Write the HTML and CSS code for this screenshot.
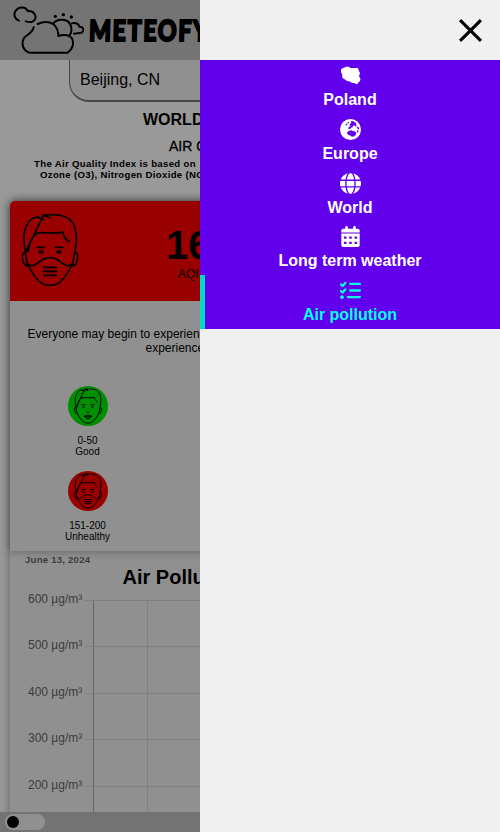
FILE: index.html
```html
<!DOCTYPE html>
<html lang="en">
<head>
<meta charset="utf-8">
<title>Meteofy</title>
<link rel="stylesheet" href="styles.css">
</head>
<body>
<svg class="defs" aria-hidden="true">
  <symbol id="head" viewBox="64 54 172 222">
    <path d="M76 173C70 140 68 105 85 83C90 75 100 68 110 66L132 74L112 65M131 60L151 70L133 60C160 58 190 57 211 75C234 98 232 135 224 173C222 198 215 214 205 230C195 246 185 260 171 267Q150 275 129 267C115 260 105 246 95 230C85 214 78 198 76 173ZM84 172C88 145 94 122 113 114C135 109 163 120 188 111Q192 132 209 140M76 173C61 168 67 208 79 212H88M224 173C239 168 233 208 221 212H212M110 157H135M165 157H190"/>
    <ellipse class="eye" cx="123" cy="171" rx="8" ry="5"/><ellipse class="eye" cx="177" cy="171" rx="8" ry="5"/>
  </symbol>
  <symbol id="mask-face" viewBox="64 54 172 222">
    <use href="#head" x="64" y="54" width="172" height="222"/>
    <path d="M79 205C95 220 112 207 127 194Q150 181 173 194C188 207 205 220 221 205M129 217H171M129 229H171M129 241H171"/>
  </symbol>
  <symbol id="happy-face" viewBox="64 54 172 222">
    <use href="#head" x="64" y="54" width="172" height="222"/>
    <path d="M142 202Q150 208 158 202M128 227Q150 216 172 227Q150 260 128 227ZM136 231H164"/>
  </symbol>
</svg>
<header class="header">
  <svg class="logo" viewBox="0 0 252 180"><path d="M57 62C45 58 40 45 46 34C54 20 76 18 83 33C92 32 98 34 102 40C110 48 107 62 97 65Q87 67 77 64M113 72C130 64 150 64 162 74C172 84 175 95 175 108C190 102 208 104 216 115C223 130 218 148 203 158H88C70 152 64 135 70 118C76 103 96 104 101 82M160 70C172 55 205 54 212 76C216 88 214 98 210 104M216 70C228 66 236 72 238 80C250 80 254 90 246 97C240 101 230 99 222 101"/><g class="dots"><circle cx="166" cy="49" r="5"/><circle cx="190" cy="44" r="5"/><circle cx="214" cy="51" r="5"/></g></svg>
  <span class="brand">METEOFY</span>
</header>
<main class="page">
  <div class="search">Beijing, CN</div>
  <h1>WORLD AIR</h1>
  <h2>AIR QUALITY</h2>
  <p class="intro">The Air Quality Index is based on</p>
  <p class="intro second">Ozone (O3), Nitrogen Dioxide (NO2)</p>
  <section class="panel">
    <div class="card">
      <div class="score"><svg class="face"><use href="#mask-face"/></svg><div class="value"><strong>162</strong><span>AQI</span></div></div>
      <p class="advice">Everyone may begin to experience</p>
      <p class="advice more">experience</p>
      <div class="levels">
        <div class="level"><div class="circle good"><svg><use href="#happy-face"/></svg></div><span>0-50</span><span>Good</span></div>
        <div class="level"><div class="circle"><svg><use href="#mask-face"/></svg></div><span>151-200</span><span>Unhealthy</span></div>
      </div>
    </div>
    <div class="date">June 13, 2024</div>
    <h3>Air Pollution</h3>
    <div class="chart">
      <div class="tick"><span>600 µg/m³</span><i></i></div>
      <div class="tick"><span>500 µg/m³</span><i></i></div>
      <div class="tick"><span>400 µg/m³</span><i></i></div>
      <div class="tick"><span>300 µg/m³</span><i></i></div>
      <div class="tick"><span>200 µg/m³</span><i></i></div>
    </div>
  </section>
</main>
<footer class="footer"><div class="toggle"><i></i></div></footer>
<div class="shade"></div>
<aside class="drawer">
  <div class="close"><svg viewBox="0 0 24 24"><path d="M2 2L22 22M22 2L2 22"/></svg></div>
  <nav>
    <a><svg viewBox="0 0 21 21"><path d="M1 4.500L3 3L7 1.500L9.500 2L10 3L18 3L18.500 5L20 8L19 11L20.500 14L20 16L17.500 18.500L17 19.500L14 18L12 18L10 16.500L7 16L5 14.500L2.500 13L2 9L1 7Z"/></svg>Poland</a>
    <a><svg viewBox="0 0 512 512"><path fill-rule="evenodd" d="M256 0a256 256 0 1 0 0 512a256 256 0 1 0 0-512ZM268 52L310 50L345 70L375 90L402 118L390 142L410 162L392 184L366 176L350 150L322 164L306 200L278 206L262 230L228 246L196 232L210 202L240 184L260 160L230 150L246 120L270 94ZM180 84L208 70L222 88L196 108L176 106ZM140 128L172 112L180 136L154 156L134 150ZM404 204L440 180L463 220L466 260L438 250ZM220 286L276 272L310 292L350 298L386 326L400 356L372 400L322 430L280 424L250 400L206 390L176 362L174 320ZM410 270L452 290L436 342L412 310Z"/></svg>Europe</a>
    <a><svg viewBox="0 0 512 512"><path d="M352 256c0 22.200-1.200 43.600-3.300 64H163.300c-2.200-20.400-3.300-41.800-3.300-64s1.200-43.600 3.300-64h185.300c2.200 20.400 3.400 41.800 3.400 64zm28.800-64h123.100c5.300 20.500 8.100 41.900 8.100 64s-2.800 43.500-8.100 64H380.800c2.100-20.600 3.200-42 3.200-64s-1.100-43.400-3.200-64zm112.600-32H376.700c-10-63.900-29.800-117.400-55.300-151.600C399.600 29.200 463.400 86.400 493.400 160zm-149.100 0H167.700c6.100-36.400 15.500-68.600 27-94.700C214.700 20.700 236.200 0 256 0s41.300 20.700 61.300 65.300c11.500 26.100 20.900 58.300 27 94.700zm-209 0H18.600C48.600 86.400 112.400 29.200 190.600 8.400C165.100 42.600 145.300 96.100 135.300 160zM8.100 192h123.100c-2.100 20.600-3.200 42-3.200 64s1.100 43.400 3.200 64H8.100C2.800 299.500 0 278.100 0 256s2.800-43.500 8.100-64zm186.600 254.700c-11.600-26-20.900-58.300-27-94.700h176.600c-6.100 36.400-15.500 68.600-27 94.700C297.300 491.300 275.800 512 256 512s-41.300-20.700-61.300-65.300zM135.300 352c10 63.900 29.800 117.400 55.300 151.600C112.400 482.800 48.600 425.600 18.600 352h116.700zm358.100 0c-30 73.600-93.800 130.800-172 151.600c25.500-34.200 45.300-87.700 55.300-151.600h116.700z"/></svg>World</a>
    <a><svg viewBox="0 0 448 512"><path fill-rule="evenodd" d="M128 0c17.700 0 32 14.300 32 32v32h128V32c0-17.700 14.300-32 32-32s32 14.300 32 32v32h48c26.500 0 48 21.500 48 48v48H0v-48c0-26.500 21.500-48 48-48h48V32c0-17.700 14.300-32 32-32zM0 182h448v282c0 26.500-21.500 48-48 48H48c-26.500 0-48-21.500-48-48V182zm64 76v52h60v-52H64zm130 0v52h60v-52h-60zm130 0v52h60v-52h-60zM64 384v52h60v-52H64zm130 0v52h60v-52h-60zm130 0v52h60v-52h-60z"/></svg>Long term weather</a>
    <a class="active"><svg viewBox="0 0 512 512"><path class="lines" d="M24 110L63 145L128 72M24 270L63 305L128 232M248 96H484M248 256H484M192 416H484"/><circle cx="48" cy="416" r="46"/></svg>Air pollution</a>
  </nav>
</aside>
</body>
</html>
```
FILE: styles.css
```css
* { box-sizing: border-box; }
html, body { height: 100%; overflow: hidden; }
body { margin: 0; background: #fff; color: #000; font-family: "Liberation Sans", Arial, sans-serif; display: flex; flex-direction: column; }
h1, h2, h3, p { margin: 0; white-space: nowrap; }
.defs { position: absolute; width: 0; height: 0; }
.header { height: 60px; flex: none; background: #c2c2c2; display: flex; align-items: center; }
.logo { width: 84px; height: 60px; margin-right: 5px; fill: none; stroke: #000; stroke-width: 6; stroke-linecap: round; stroke-linejoin: round; }
.dots { fill: #000; stroke: none; }
.brand { font: 900 29px/60px Lato, sans-serif; letter-spacing: 2px; transform: scaleX(.8) skewX(-2deg); transform-origin: left; -webkit-text-stroke: 2px #000; }
.page { flex: 1; min-height: 0; overflow: hidden; }
.search { width: 362px; height: 42px; margin-left: 69px; padding: 0 10px; background: #f1f1f1; border: solid #777; border-width: 0 1px 2px; border-radius: 0 0 20px 20px; font-size: 16px; line-height: 40px; }
h1 { margin: 8px 0 0 143px; font-size: 16px; line-height: 20px; }
h2 { margin: 8px 0 0 169px; font-size: 14px; font-weight: 500; line-height: 17px; -webkit-text-stroke: .3px #000; }
.intro { margin: 3px 0 0 34px; font-size: 9.6px; font-weight: bold; line-height: 11px; letter-spacing: .33px; }
.intro.second { margin: 0 0 0 40px; }
.panel { width: 480px; height: 700px; margin: 21px auto 0; background: #f1f1f1; border-radius: 5px; box-shadow: 0 0 10px rgba(0,0,0,.4); }
.card { height: 350px; border-radius: 5px 5px 0 0; overflow: hidden; box-shadow: 0 0 10px rgba(0,0,0,.35); }
.score { height: 100px; padding: 12px 0 0 11px; display: flex; background: #f00; }
.face { width: 58px; height: 74px; fill: none; stroke: #000; stroke-width: 5; }
.eye { fill: #000; stroke: none; }
.value { padding: 11px 0 0 87px; display: flex; flex-direction: column; }
.value strong { font-size: 40px; line-height: 42px; }
.value span { margin-left: 12px; font-size: 12px; line-height: 17px; }
.advice { margin: 26px 0 0 17.500px; font-size: 12px; line-height: 14px; }
.advice.more { margin: 0 0 0 135.500px; }
.levels { width: 155px; padding-top: 31px; display: grid; gap: 14px; }
.level { display: flex; flex-direction: column; align-items: center; font-size: 10px; line-height: 11px; }
.circle { width: 40px; height: 40px; margin-bottom: 9px; border-radius: 50%; background: #f00; display: flex; align-items: center; justify-content: center; }
.circle.good { background: #00ee00; }
.circle svg { width: 28px; height: 36px; fill: none; stroke: #000; stroke-width: 6; }
.date { margin: 3px 0 0 15px; color: #666; font-size: 9.6px; font-weight: bold; line-height: 11px; letter-spacing: .22px; }
h3 { margin: 0 0 0 112.500px; font-size: 20px; line-height: 24px; }
.chart { margin-top: 3px; padding-left: 18px; }
.tick { height: 46.4px; display: flex; }
.tick span { width: 57px; color: #666; font-size: 12px; line-height: 14px; white-space: nowrap; }
.tick i { flex: 1; height: 47px; margin-top: 8px; border-top: 1px solid #d6d6d6; background: linear-gradient(#aaa,#aaa) 8px 0/1px 100% no-repeat, linear-gradient(#d6d6d6,#d6d6d6) 62px 0/1px 100% no-repeat; }
.footer { height: 20px; flex: none; background: #c0c0c0; padding: 2px 5px; position: relative; }
.toggle { width: 40px; height: 16px; padding: 2px; border-radius: 8px; background: #f1f1f1; }
.toggle i { display: block; width: 12px; height: 12px; border-radius: 50%; background: #000; }
.shade { position: fixed; inset: 0; background: rgba(0,0,0,.4); }
.drawer { position: fixed; top: 0; bottom: 0; right: 0; width: 300px; background: #f0f0f0; }
.close { height: 60px; padding-right: 17px; display: flex; justify-content: flex-end; align-items: center; }
.close svg { width: 25px; height: 25px; stroke: #000; stroke-width: 3; }
nav { background: #6200ee; }
nav a { height: 53.8px; padding-top: 5px; display: flex; flex-direction: column; align-items: center; color: #fff; font-size: 16px; font-weight: bold; line-height: 18px; }
nav svg { width: 21px; height: 21px; margin-bottom: 5px; fill: currentColor; }
nav .active { color: #03ffe7; box-shadow: inset 5px 0 #03dac6; }
.lines { fill: none; stroke: currentColor; stroke-width: 56; stroke-linecap: round; stroke-linejoin: round; }
```
